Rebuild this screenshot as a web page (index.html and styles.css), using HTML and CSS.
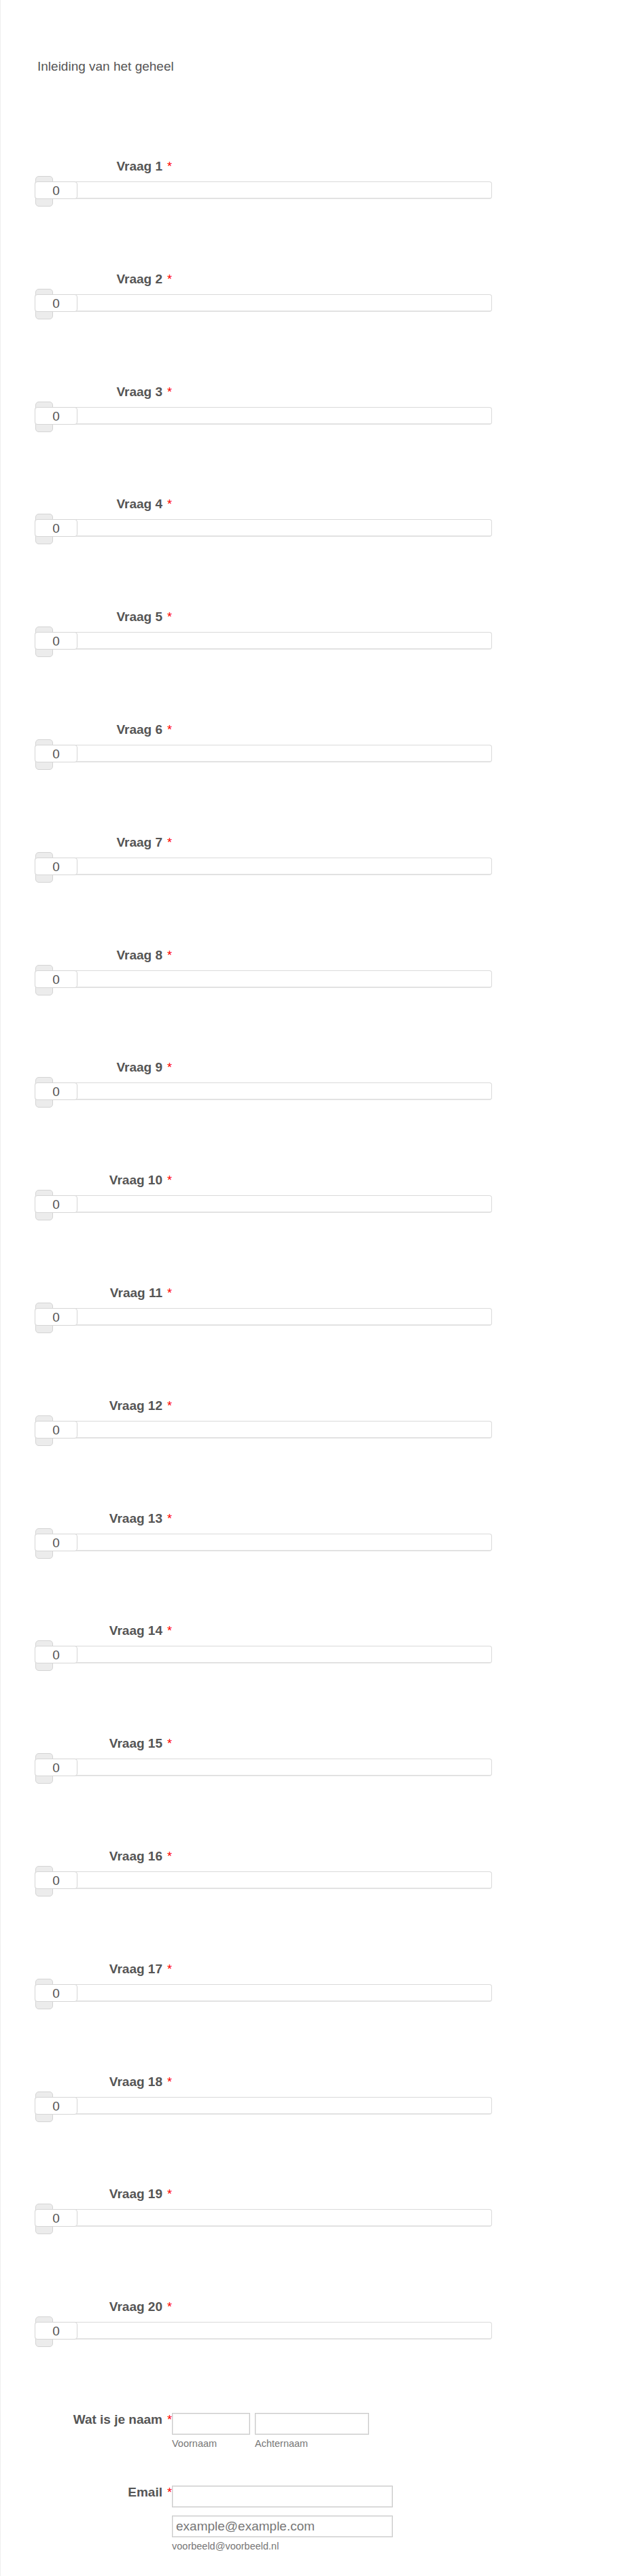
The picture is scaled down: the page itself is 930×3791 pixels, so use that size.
FILE: index.html
```html
<!DOCTYPE html>
<html lang="nl">
<head>
<meta charset="utf-8">
<title>Formulier</title>
<link rel="stylesheet" href="styles.css">
</head>
<body>
<div class="form">
  <p class="intro">Inleiding van het geheel</p>

  <div class="questions">
    <div class="question"><div class="q-label">Vraag 1<span class="req">*</span></div><div class="track"><span class="handle"></span><span class="value">0</span></div></div>
    <div class="question"><div class="q-label">Vraag 2<span class="req">*</span></div><div class="track"><span class="handle"></span><span class="value">0</span></div></div>
    <div class="question"><div class="q-label">Vraag 3<span class="req">*</span></div><div class="track"><span class="handle"></span><span class="value">0</span></div></div>
    <div class="question"><div class="q-label">Vraag 4<span class="req">*</span></div><div class="track"><span class="handle"></span><span class="value">0</span></div></div>
    <div class="question"><div class="q-label">Vraag 5<span class="req">*</span></div><div class="track"><span class="handle"></span><span class="value">0</span></div></div>
    <div class="question"><div class="q-label">Vraag 6<span class="req">*</span></div><div class="track"><span class="handle"></span><span class="value">0</span></div></div>
    <div class="question"><div class="q-label">Vraag 7<span class="req">*</span></div><div class="track"><span class="handle"></span><span class="value">0</span></div></div>
    <div class="question"><div class="q-label">Vraag 8<span class="req">*</span></div><div class="track"><span class="handle"></span><span class="value">0</span></div></div>
    <div class="question"><div class="q-label">Vraag 9<span class="req">*</span></div><div class="track"><span class="handle"></span><span class="value">0</span></div></div>
    <div class="question"><div class="q-label">Vraag 10<span class="req">*</span></div><div class="track"><span class="handle"></span><span class="value">0</span></div></div>
    <div class="question"><div class="q-label">Vraag 11<span class="req">*</span></div><div class="track"><span class="handle"></span><span class="value">0</span></div></div>
    <div class="question"><div class="q-label">Vraag 12<span class="req">*</span></div><div class="track"><span class="handle"></span><span class="value">0</span></div></div>
    <div class="question"><div class="q-label">Vraag 13<span class="req">*</span></div><div class="track"><span class="handle"></span><span class="value">0</span></div></div>
    <div class="question"><div class="q-label">Vraag 14<span class="req">*</span></div><div class="track"><span class="handle"></span><span class="value">0</span></div></div>
    <div class="question"><div class="q-label">Vraag 15<span class="req">*</span></div><div class="track"><span class="handle"></span><span class="value">0</span></div></div>
    <div class="question"><div class="q-label">Vraag 16<span class="req">*</span></div><div class="track"><span class="handle"></span><span class="value">0</span></div></div>
    <div class="question"><div class="q-label">Vraag 17<span class="req">*</span></div><div class="track"><span class="handle"></span><span class="value">0</span></div></div>
    <div class="question"><div class="q-label">Vraag 18<span class="req">*</span></div><div class="track"><span class="handle"></span><span class="value">0</span></div></div>
    <div class="question"><div class="q-label">Vraag 19<span class="req">*</span></div><div class="track"><span class="handle"></span><span class="value">0</span></div></div>
    <div class="question"><div class="q-label">Vraag 20<span class="req">*</span></div><div class="track"><span class="handle"></span><span class="value">0</span></div></div>

    <div class="field-row">
      <div class="f-label">Wat is je naam<span class="req">*</span></div>
      <div class="name-group">
        <div class="sub">
          <input class="text-in first" type="text">
          <div class="sublabel">Voornaam</div>
        </div>
        <div class="sub">
          <input class="text-in last" type="text">
          <div class="sublabel">Achternaam</div>
        </div>
      </div>
    </div>
  </div>

  <div class="field-row email-row">
    <div class="f-label">Email<span class="req">*</span></div>
    <div class="sub">
      <input class="text-in email" type="email">
      <input class="text-in email confirm" type="email" placeholder="example@example.com">
      <div class="sublabel">voorbeeld@voorbeeld.nl</div>
    </div>
  </div>
</div>
</body>
</html>
```

FILE: styles.css
```css
html, body {
  margin: 0;
  padding: 0;
  background: #ffffff;
}

body {
  font-family: "Liberation Sans", Arial, sans-serif;
  color: #555555;
}

.form {
  min-height: 3791px;
  box-sizing: border-box;
  border-left: 1px solid #efefef;
  padding-top: 87px;
}

.intro {
  margin: 0 0 0 54px;
  font-size: 19px;
  line-height: 22px;
  color: #555555;
}

.questions {
  margin-top: 126px;
  display: flex;
  flex-direction: column;
  gap: 107.8px;
}

.question {
  display: flex;
  flex-direction: column;
}

.q-label,
.f-label {
  width: 252px;
  flex-shrink: 0;
  text-align: right;
  font-weight: bold;
  font-size: 19px;
  line-height: 20px;
  color: #555555;
}

.q-label {
  margin-bottom: 12px;
}

.req {
  font-weight: normal;
  font-size: 18px;
  color: #ff0000;
  margin-left: 7px;
}

.track {
  position: relative;
  margin-left: 50px;
  width: 673px;
  height: 26px;
  box-sizing: border-box;
  border: 1px solid #dadada;
  border-bottom: 2px solid #e2e2e2;
  border-radius: 4px;
  background: #ffffff;
}

.handle {
  position: absolute;
  left: 0;
  top: -9px;
  width: 26px;
  height: 45px;
  box-sizing: border-box;
  background: #ececec;
  border: 1px solid #d4d4d4;
  border-radius: 5px;
}

.value {
  position: absolute;
  left: -1px;
  top: -1px;
  width: 63px;
  height: 26px;
  box-sizing: border-box;
  background: #ffffff;
  border: 1px solid #d6d6d6;
  border-radius: 4px;
  text-align: center;
  font-size: 19px;
  line-height: 26px;
  color: #555555;
}

.field-row {
  display: flex;
  align-items: flex-start;
}

.name-group {
  display: flex;
  gap: 7px;
}

.sub {
  display: flex;
  flex-direction: column;
}

.text-in {
  display: block;
  box-sizing: border-box;
  height: 32px;
  margin: 0;
  padding: 0 5px;
  font-family: "Liberation Sans", Arial, sans-serif;
  font-size: 19px;
  color: #555555;
  background: #ffffff;
  border: 1px solid #c9c9c9;
  box-shadow: inset 0 0 0 1px #ececec;
  border-radius: 0;
  outline: none;
}

.text-in::placeholder {
  color: #777777;
}

.text-in.first {
  width: 115px;
}

.text-in.last {
  width: 168px;
}

.text-in.email {
  width: 325px;
}

.text-in.confirm {
  margin-top: 12px;
}

.sublabel {
  margin-top: 5px;
  font-size: 14.5px;
  line-height: 17px;
  color: #777777;
}

.email-row {
  margin-top: 53px;
}
```
